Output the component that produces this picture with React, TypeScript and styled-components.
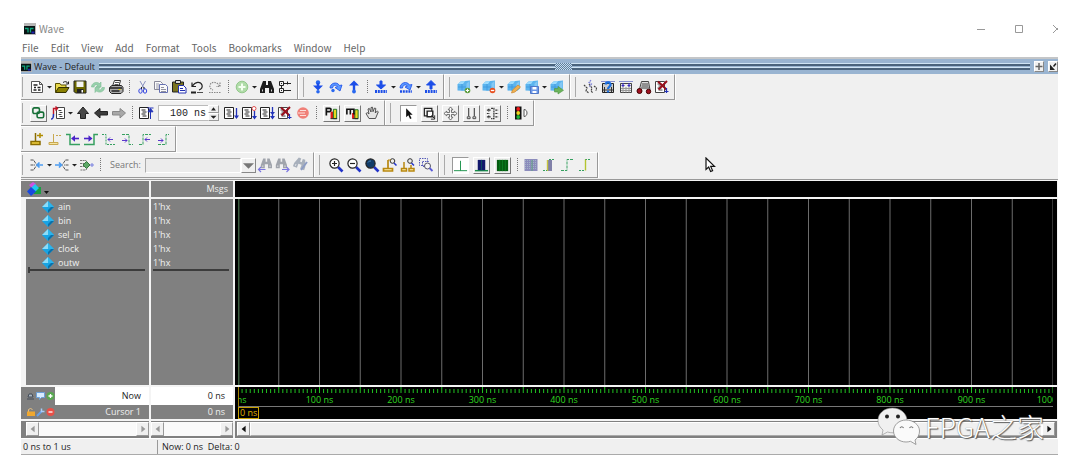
import React from "react";
import styled, { createGlobalStyle, css } from "styled-components";

const GlobalStyle = createGlobalStyle`
  * { box-sizing: border-box; }
  body { margin: 0; background: #fff; font-family: "Open Sans", "Noto Sans", sans-serif; }
  button, input, select { font: inherit; margin: 0; }
  ul { list-style: none; margin: 0; padding: 0; }
`;

/* ---------- window frame ---------- */
const Window = styled.main`
  position: relative;
  margin: 20px 22px 20px 21px;
  font-size: 9px;
  line-height: 14px;
  color: #222;
`;
const TitleBar = styled.header`
  display: flex;
  align-items: center;
  height: 18px;
  padding-left: 3px;
  gap: 3px;
  overflow: hidden;
  font-size: 10px;
  color: #888;
`;
const TitleText = styled.h1`
  flex: 1;
  margin: 0;
  font: inherit;
  font-family: "Noto Sans CJK SC", sans-serif;
`;
const WindowControls = styled.div`
  display: flex;
  gap: 28px;
  margin-right: -4px;
`;
const WindowButton = styled.button`
  display: block;
  width: 10px;
  height: 10px;
  padding: 0;
  border: 0;
  background: none;
  svg { display: block; }
`;
const MenuBar = styled.nav`
  display: flex;
  gap: 12px;
  height: 19px;
  padding-left: 1px;
  align-items: center;
`;
const MenuItem = styled.button`
  padding: 0;
  border: 0;
  background: none;
  color: #666;
  font-family: "Noto Sans CJK SC", sans-serif;
  font-size: 10px;
  line-height: 16px;
`;

/* ---------- pane header ---------- */
const PaneHeader = styled.div`
  display: flex;
  align-items: center;
  gap: 4px;
  height: 17px;
  border-top: 2px solid #c4c6c8;
  background: #99b4d1;
  color: #222;
`;
const PaneTitle = styled.h2`
  margin: 0 0 0 -2px;
  font: inherit;
  font-size: 9px;
  white-space: nowrap;
`;
const Rails = styled.div`
  flex: 1;
  display: flex;
  flex-direction: column;
  gap: 1px;
  position: relative;
`;
const Rail = styled.span`
  height: 3px;
  border-top: 1px solid #cfe4f4;
  border-bottom: 2px solid #4a637c;
`;
const RailGrip = styled.span`
  position: absolute;
  top: 0;
  left: 49%;
  width: 17px;
  height: 7px;
  background: repeating-conic-gradient(#5f7f9d 0 25%, #c8def0 0 50%) 0 0 / 2px 2px;
`;
const PaneButton = styled.button`
  width: 10px;
  height: 11px;
  padding: 0;
  border: 1px solid #fff;
  border-right-color: #888;
  border-bottom-color: #888;
  background: #f0f0f0;
  svg { display: block; }
`;

/* ---------- toolbars ---------- */
const ToolbarArea = styled.section`
  background: #f0f0f0;
  padding-bottom: 1px;
`;
const ToolbarRow = styled.div`
  display: flex;
  height: 26px;
`;
const Toolbar = styled.div<{ $lead?: number; $first?: boolean }>`
  display: flex;
  align-items: center;
  padding: 0 3px 0 ${(p) => (p.$first ? 7 : p.$lead ?? 11)}px;
  border-top: 1px solid #fff;
  border-right: 1px solid #999;
  border-bottom: 1px solid #999;
  background: linear-gradient(#aaa, #aaa) ${(p) => (p.$first ? 1 : 5)}px 2px / 1px 20px no-repeat;
  box-shadow: 1px 0 0 #fff;
`;
const Tool = styled.button<{ $raised?: boolean; $pressed?: boolean }>`
  flex: none;
  width: 18px;
  height: 18px;
  padding: 0 1px;
  border: 0;
  background: none;
  svg { display: block; }
  ${(p) =>
    (p.$raised || p.$pressed) &&
    css`
      width: 17px;
      height: 17px;
      margin: 0 2px;
      padding: 0;
      border: 1px solid ${p.$pressed ? "#999" : "#fff"};
      border-right-color: ${p.$pressed ? "#fff" : "#777"};
      border-bottom-color: ${p.$pressed ? "#fff" : "#777"};
      background: ${p.$pressed ? "#fff" : "#f0f0f0"};
    `}
`;
const Caret = styled.button`
  flex: none;
  width: 7px;
  height: 16px;
  padding: 0 1px;
  border: 0;
  background: none;
  svg { display: block; }
`;
const Separator = styled.span`
  flex: none;
  width: 9px;
  height: 14px;
  background: repeating-linear-gradient(#777 0 1px, transparent 1px 2px) 4px 0 / 1px 14px no-repeat;
`;
const RunLength = styled.div`
  display: flex;
  margin: 0 3px;
`;
const RunInput = styled.input`
  width: 50px;
  height: 16px;
  padding: 0 2px 0 0;
  border: 1px solid #bbb;
  border-right: 0;
  background: #fff;
  color: #222;
  font-family: "Liberation Mono", monospace;
  font-size: 10px;
  text-align: right;
`;
const Spinner = styled.div`
  display: flex;
  flex-direction: column;
  width: 11px;
`;
const SpinButton = styled.button`
  height: 8px;
  padding: 0;
  border: 1px solid #fff;
  border-right-color: #999;
  border-bottom-color: #999;
  background: #f0f0f0;
  svg { display: block; }
`;
const SearchLabel = styled.label`
  width: 40px;
  padding-left: 5px;
  color: #777;
`;
const SearchBox = styled.div`
  display: flex;
  width: 111px;
  height: 15px;
`;
const SearchInput = styled.input`
  flex: 1;
  min-width: 0;
  border: 1px solid #aaa;
  border-right-color: #fff;
  border-bottom-color: #fff;
  background: #ececec;
`;
const SearchDrop = styled.button`
  width: 15px;
  padding: 0 1px;
  border: 1px solid #fff;
  border-right-color: #888;
  border-bottom-color: #888;
  background: #f0f0f0;
  svg { display: block; }
`;

/* ---------- wave grid ---------- */
const WaveGrid = styled.section`
  display: grid;
  grid-template-columns: 128px 82px minmax(0, 1fr);
  grid-template-rows: 16px minmax(186px, auto) 32px 17px;
  gap: 2px;
  padding: 1px 1px 0 0;
  border-top: 1px solid #999;
  background: #f4f4f4;
  color: #f0f0f0;
`;
const HeadCell = styled.div<{ $end?: boolean; $dark?: boolean }>`
  display: flex;
  align-items: center;
  justify-content: ${(p) => (p.$end ? "flex-end" : "flex-start")};
  padding: 0 5px;
  background: ${(p) => (p.$dark ? "#000" : "#808080")};
`;
const SignalPane = styled.div<{ $names?: boolean }>`
  padding: 1px 4px 0 2px;
  margin-left: ${(p) => (p.$names ? 5 : 0)}px;
  background: #808080;
`;
const SignalItem = styled.li<{ $names?: boolean }>`
  display: flex;
  align-items: center;
  gap: 4px;
  height: 14px;
  padding-left: ${(p) => (p.$names ? 14 : 0)}px;
`;
const InsertLine = styled.hr<{ $marker?: boolean }>`
  height: 6px;
  margin: -3px 0 0;
  border: 0;
  background:
    linear-gradient(#3c3c3c, #3c3c3c) 0 2px / 100% 2px no-repeat,
    linear-gradient(#3c3c3c, #3c3c3c) 0 0 / ${(p) => (p.$marker ? 2 : 0)}px 6px no-repeat;
`;
const Canvas = styled.div`
  padding: 0 4px 0 3px;
  background: #000;
  svg { display: block; }
`;
const FootPane = styled.div`
  display: grid;
  grid-template-rows: 18px 14px;
  background: #808080;
`;
const NowRow = styled.div`
  display: flex;
  background: #fff;
  color: #222;
`;
const CursorRow = styled.div`
  display: flex;
`;
const MiniTools = styled.div`
  display: flex;
  align-items: center;
  gap: 1px;
  width: 34px;
  padding-left: 5px;
  background: #808080;
`;
const FootText = styled.span<{ $tall?: boolean }>`
  flex: 1;
  padding-right: 8px;
  text-align: right;
  line-height: ${(p) => (p.$tall ? 18 : 14)}px;
`;
const MiniButton = styled.button`
  width: 9px;
  height: 10px;
  padding: 0;
  border: 0;
  background: none;
  svg { display: block; }
`;
const Timeline = styled.div`
  display: grid;
  grid-template-rows: 19px 13px;
  padding: 0 4px 0 3px;
  background: #000;
  svg { display: block; }
`;
const CursorTrack = styled.div`
  display: flex;
  align-items: flex-start;
  border-top: 1px solid #777;
`;
const CursorTag = styled.span`
  height: 12px;
  padding: 0 1px;
  border: 1px solid #c8a000;
  color: #e0b400;
  line-height: 10px;
`;
const ScrollCell = styled.div<{ $names?: boolean; $wide?: boolean }>`
  display: flex;
  padding: 1px ${(p) => (p.$wide ? 2 : 0)}px 2px ${(p) => (p.$names ? 5 : p.$wide ? 2 : 0)}px;
  background: #808080;
`;
const ScrollButton = styled.button`
  width: 13px;
  padding: 0 2px;
  border: 1px solid #fff;
  border-right-color: #999;
  border-bottom-color: #999;
  background: #f0f0f0;
  svg { display: block; }
`;
const ScrollTrack = styled.div<{ $filled?: boolean }>`
  flex: 1;
  background: ${(p) => (p.$filled ? "#f0f0f0" : "#fafafa")};
  border: ${(p) => (p.$filled ? "1px solid #fff" : "0")};
  border-bottom-color: #aaa;
`;
const StatusBar = styled.footer`
  display: flex;
  align-items: center;
  height: 17px;
  border-top: 1px solid #fff;
  border-bottom: 1px solid #aaa;
  background: #f0f0f0;
`;
const StatusCell = styled.span<{ $width?: number }>`
  width: ${(p) => (p.$width ? `${p.$width}px` : "auto")};
  padding-left: ${(p) => (p.$width ? 2 : 4)}px;
  border-left: ${(p) => (p.$width ? "0" : "1px solid #999")};
  white-space: pre;
`;

/* ---------- overlays ---------- */
const Pointer = styled.svg`
  position: absolute;
  left: 684px;
  top: 137px;
`;
const Watermark = styled.div`
  position: absolute;
  right: 14px;
  bottom: 8px;
  display: flex;
  align-items: center;
  gap: 4px;
  color: #fff;
  font-family: "Noto Sans CJK SC", sans-serif;
  font-size: 27px;
  font-weight: 300;
  line-height: 38px;
  white-space: nowrap;
  text-shadow: 1px 1px 1px #555, 0 0 1px #777;
`;

/* ---------- icons ---------- */
const Lines = ({ c = "#222" }: { c?: string }) => (
  <path d="M1.500 2.500h9v11h-9zM3.500 5h4M4.500 7h4M3.500 9h4M4.500 11h4" stroke={c} fill="#fff" />
);
const Cube = () => (
  <>
    <path d="M1.500 5.500 4.500 2.500l9.500-1v8l-3 2.500-9.500-.5z" fill="#5cb4ee" />
    <path d="m2 5 2.800-2.500L9 2 7 5z" fill="#9cdcff" />
    <path d="m10.500 4.500 3-2.500v7l-3 2z" fill="#84c8f4" />
    <path d="M6 5v6.500M2 8h8" stroke="#3c98dc" strokeWidth=".8" />
  </>
);
const Bino = ({ c }: { c: string }) => (
  <g fill={c}>
    <path d="M4 2h3v4h2V2h3l3 8v4h-5V9H6v5H1v-4z" />
    <path d="M3.500 10.500v2M12.500 10.500v2" stroke="#fff" strokeWidth=".8" />
  </g>
);
const Lens = ({ children, fill = "#fff" }: { children?: React.ReactNode; fill?: string }) => (
  <>
    <path d="m10 10 4.500 4.500" stroke="#2233c8" strokeWidth="2.600" />
    <circle cx="6.500" cy="6.500" r="4.600" fill={fill} stroke="#222" strokeWidth="1.200" />
    {children}
  </>
);
const G = "#36a060";
const V = "#4a22c8";

const icons: Record<string, React.ReactNode> = {
  new: <><path d="M2.500 2.500h8l3 3v8h-11zM10.500 2.500v3h3" fill="#fff" stroke="#555" /><path d="M4.500 6h4M5 8.500h2M8.500 8.500h3M4.500 11h3M9 11h2.500" stroke="#222" strokeWidth="1.300" /></>,
  open: <><path d="M1.500 13V4.500H6l1 1.500h5v2.500" fill="#e8d84c" stroke="#5a5200" /><path d="m1.500 13.500 3-5H15l-3 5z" fill="#8a8000" stroke="#333000" /><path d="M9 3.500c2-1.500 4-1 5 1M14.500 2.500v2.500h-2.500" stroke="#222" fill="none" /></>,
  save: <><path d="M2 2h12v12H3.500L2 12.500z" fill="#6e6a00" stroke="#222" /><path d="M4.500 2.500h7V8h-7z" fill="#f4f4f4" /><path d="M5 10h6.500v4H5z" fill="#222" /><path d="M9.500 11h1.500v2.500H9.500z" fill="#fff" /></>,
  reload: <g fill="#98d0ac" stroke="#7cbc94" strokeWidth=".6"><path d="M1.500 8c0-4 5-6 8-3.500L11 3v5H6l1.600-1.800C6 5 4.500 6 4 8z" /><path d="M14.500 8.500c0 4-5 6-8 3.500L5 13.500v-5h5l-1.600 1.800c1.600 1.200 3.100.2 3.600-1.800z" /></g>,
  print: <><path d="m4.500 7 2-5.500h6L11 7" fill="#fff" stroke="#333" /><path d="M7 3.500h4M6.500 5.500h4" stroke="#555" /><path d="M1.500 8.500 4 6.500h9.500l1.500 2v4l-2 2H3.500l-2-2z" fill="#aaa" stroke="#222" /><path d="M2 9h12M3.500 12h8" stroke="#222" strokeWidth="1.300" /><path d="M10.500 10.500h2" stroke="#e8d800" /></>,
  cut: <g fill="none"><path d="m5 2 4.500 8M10.500 2 6 10" stroke="#8890c0" /><path d="M6.500 8v2M9 8v2" stroke="#222" /><ellipse cx="5.500" cy="12" rx="1.700" ry="2.200" stroke="#3344e0" /><ellipse cx="10" cy="12" rx="1.700" ry="2.200" stroke="#3344e0" /></g>,
  copy: <><path d="M1.500 2.500h6l2 2v6h-8z" fill="#fafafa" stroke="#889" /><path d="M3 5h3M3 7h4M3 9h4" stroke="#99a" /><path d="M6.500 5.500h6l2 2v6h-8z" fill="#fafafa" stroke="#6670b0" /><path d="M8 8.500h3M8 10.500h5M8 12.500h5" stroke="#778" strokeWidth=".8" /></>,
  paste: <><path d="M1.500 3h11v10h-11z" fill="#7a7420" stroke="#222" /><path d="M4.500 1.500h5v3h-5z" fill="#ddd" stroke="#222" /><path d="M7.500 6.500h5l2.500 2.500v5H7.500z" fill="#fff" stroke="#2230b0" /><path d="M9 9.500h3M9 11.500h5" stroke="#2230b0" /></>,
  undo: <g fill="none" stroke="#222" strokeWidth="1.200"><path d="M3 3.500v4h4M3.500 7C6 2.500 11.500 2 13 6c.6 2-.5 4-3 5" /><path d="M2 13.500h5" strokeWidth="2" /><path d="M8 13.500h6" strokeWidth=".8" /></g>,
  redo: <g fill="none" stroke="#888" strokeWidth="1.200" strokeDasharray="1.500 1"><path d="M13 3.500v4H9M12.500 7C10 2.500 4.500 2 3 6c-.6 2 .5 4 3 5" /><path d="M2 13.500h12" /></g>,
  addGreen: <><circle cx="8" cy="8" r="5.800" fill="#b0dca8" stroke="#94c88c" /><path d="M8 4.500v7M4.500 8h7" stroke="#f4fff0" strokeWidth="2" /></>,
  find: <Bino c="#1c1c1c" />,
  tree: <g fill="none" stroke="#222"><path d="M2.500 2.500h4v4h-4zM2.500 9.500h4v4h-4zM7 4.500h7M7 11.500h7M4.500 6.500v3" /><path d="M4 4.500h1M4 11.500h1M10.500 2.500v3" /></g>,
  dnBlue: <><circle cx="8" cy="3.500" r="2.200" fill="#2868f0" /><path d="M6.800 4h2.400v2.500h3.800L8 11.500 3 6.500h3.800z" fill="#1c4ee8" /><circle cx="8" cy="12.800" r="1.800" fill="#2868f0" /></>,
  overBlue: <><path d="M2 9C2 4 9 2 11.500 6.500L14 6l-2 6-5-3.500 2.400-.8C8 5.500 5 6 4.500 9z" fill="#5a98ff" stroke="#1c4ee8" strokeWidth=".8" /><circle cx="5" cy="11.500" r="1.700" fill="#2868f0" /></>,
  upBlue: <><path d="M8 1.500 3 6.500h3.800v4.500h2.400V6.500H13z" fill="#1c4ee8" /><circle cx="8" cy="12.500" r="1.900" fill="#2868f0" /></>,
  dnLine: <><path d="M7 2h2v4h3.500L8 10 3.500 6H7z" fill="#1c4ee8" stroke="#1c4ee8" /><path d="M2 12.500h12" stroke="#1c4ee8" strokeWidth="3" strokeDasharray="2 .8" /></>,
  overLine: <><path d="M2 9C2 3.500 9 1.500 11.500 6L14 5.500l-2 5.500-5-3 2.400-.8C8 5 5 5.500 4.500 9z" fill="#5a98ff" stroke="#1c4ee8" strokeWidth=".8" /><path d="M2 12.500h12" stroke="#1c4ee8" strokeWidth="2.400" strokeDasharray="2 .8" /></>,
  upLine: <><path d="M8 1.500 3.500 6H7v4h2V6h3.500z" fill="#1c4ee8" stroke="#1c4ee8" /><path d="M2 12.500h12" stroke="#1c4ee8" strokeWidth="3" strokeDasharray="2 .8" /></>,
  cubeAdd: <><Cube /><circle cx="11.500" cy="11.500" r="2.800" fill="#5c9c3c" /><path d="M11.500 9.800v3.400M9.800 11.500h3.400" stroke="#fff" /></>,
  cubeDel: <><Cube /><circle cx="11.500" cy="11.500" r="2.800" fill="#e85020" /><path d="M9.800 11.500h3.400" stroke="#fff" strokeWidth="1.300" /></>,
  cubeEdit: <><Cube /><path d="m5.500 14 1-3L12 6l2.500 2L9 13z" fill="#f0b050" stroke="#c88830" strokeWidth=".7" /></>,
  cubeSave: <><Cube /><path d="M6.500 7.500h8v7h-8z" fill="#6c98e8" stroke="#5078c8" /><path d="M8.500 8h4v2.500h-4zM8.500 12h4v2h-4z" fill="#fff" /></>,
  cubeGo: <><Cube /><path d="M5.500 9.500H9V7.500l5.500 3.800L9 15v-2H5.500z" fill="#6cb45c" stroke="#4c9440" strokeWidth=".6" /></>,
  squiggle: <g fill="none" stroke="#444" strokeWidth="1.200" strokeDasharray="2 .8"><path d="m2 6 3 3-1 3 3 2M7 5l3 4-1 3 2 2M12 7l2.500 2-.5 3" /><path d="m9 1-2 2.500L9.500 5 7.500 8" stroke="#7a80d8" /></g>,
  memHelp: <><path d="M2.500 4.500h11v9h-11z" fill="#ccc" stroke="#222" /><path d="M1.500 2.500h13" stroke="#2233b0" strokeDasharray="1 1" /><path d="M3 11h10M4.500 8v5M11.500 8v5" stroke="#333" /><path d="M5.500 5.500C6 2.500 11 2.800 10.500 6 10.200 8 8 7.800 8 10M8 11.500v2" stroke="#1c70e0" strokeWidth="2.200" fill="none" /></>,
  mem: <><path d="M2.500 4.500h11v9h-11z" fill="#eee" stroke="#444" /><path d="M3 9.500h10M3 11.500h10M5 8v5.500M8 8v5.500M11 8v5.500" stroke="#999" /><path d="M1.500 2.500h13" stroke="#2233b0" strokeDasharray="1 1" /><path d="M5 4v4M3.500 6.500h3M11 4v4M9.500 6.500h3" stroke="#3a2cc0" strokeWidth="1.200" /></>,
  car: <><path d="m3.500 10 2-7.500h7L14 11M6 5h6M5.500 7h7M5 9h8" fill="#ddd" stroke="#444" /><circle cx="3.500" cy="12" r="2.500" fill="#a01020" stroke="#400" /><circle cx="12.500" cy="12.500" r="2.200" fill="#a01020" stroke="#400" /></>,
  stopX: <><Lines c="#444" /><path d="m4 2.500 8.500 8M13 2 4.500 10.500" stroke="#98101c" strokeWidth="2" /><path d="M12.500 9v5M10.500 12.500h4" stroke="#2030b8" strokeWidth="1.200" /></>,

  link: <g fill="none" stroke="#187038" strokeWidth="1.700"><rect x="2" y="2" width="7" height="6" rx="1.500" /><rect x="6.500" y="6.500" width="7" height="6" rx="1.500" /></g>,
  restart: <><path d="M6.500 2.500h8v11h-8zM8.500 5.500h3M9.500 7.500h3M8.500 9.500h3M9.500 11.500h3" fill="#fff" stroke="#444" /><path d="M3.500 9V3.500H7M5.500 1.500l2 2-2 2" stroke="#c01828" fill="none" strokeWidth="1.400" /><path d="M1 14c2 0 2.500-1 2.500-5" stroke="#2233b8" fill="none" strokeWidth="1.600" /></>,
  up: <path d="M8 2 2.500 8.500h3v5h5v-5h3z" fill="#484848" stroke="#222" />,
  left: <path d="M1.500 8 7 3.500v3h7.500v3.500H7v3z" fill="#3c3c3c" stroke="#222" />,
  right: <path d="M14.500 8 9 3.500v3H1.500v3.500H9v3z" fill="#a8a8a8" stroke="#888" />,
  runFrom: <><Lines /><path d="M12.500 14V6M9.500 3h6M12.500 3.500 10 6.800h5z" stroke="#2233b8" fill="#2233b8" /></>,
  run: <><Lines /><path d="M13.500 3v9" stroke="#2233b8" strokeWidth="1.300" /><path d="m11 10.500 2.500 3.500 2.500-3.500z" fill="#2233b8" /></>,
  runRed: <><Lines /><path d="M13.500 6v7" stroke="#2233b8" strokeWidth="1.300" /><path d="m11 11 2.500 3.500L16 11z" fill="#2233b8" /><circle cx="13" cy="3.500" r="2" fill="#fff" stroke="#e05050" /></>,
  runAll: <><Lines /><path d="M13.500 2v11" stroke="#2233b8" strokeWidth="1.300" /><path d="m11 7 2.500 3L16 7zM11 11l2.500 3.500L16 11z" fill="#2233b8" /></>,
  stop: <><circle cx="8" cy="8" r="5.800" fill="#f08078" /><path d="M5 5.500h6M3 8h7M5 10.500h6" stroke="#fbe0dc" strokeWidth="1.200" /></>,
  pChart: <><path d="M7 13.500V6h3v7.500z" fill="#e01818" /><path d="M10 3.500h3.500v10H10z" fill="#e8d820" stroke="#187028" /><path d="M7 13.500h7" stroke="#222" /><path d="M2.500 10V2.500H6q1.500 0 1.500 1.600T6 6H3" stroke="#111" strokeWidth="1.800" fill="none" /></>,
  mChart: <><path d="M7.500 13.500V7.500h3v6z" fill="#e01818" /><path d="M10.500 4h3.500v9.500h-3.500z" fill="#e8d820" stroke="#187028" /><path d="M8 13.500h6" stroke="#222" /><path d="M2 9V3.500h7.500V9M5.700 3.500V9" stroke="#111" strokeWidth="1.700" fill="none" /></>,
  hand: <path d="M5 13.500 2 8.500l1.500-.8L5 9 4 4l1.300-.6L7 7V2.500l1.500-.3.500 4.500L10.500 3l1.300.4L11.300 8l2-2 1 .8-2.800 6.700z" fill="#e4e4e4" stroke="#444" strokeWidth=".9" />,
  select: <path d="M5.500 2.500v9.500l2.300-2.200 1.900 4 1.600-.8-1.900-3.800h3z" fill="#111" />,
  zoomMode: <><path d="M2.500 2.500h8v8h-8z" fill="none" stroke="#222" strokeWidth="1.300" /><path d="M5.500 5.500h6v6h-6z" fill="#fff" stroke="#222" strokeWidth="1.500" /><path d="m10 10 3.500 3.500M13.500 10v4h-4" stroke="#222" /></>,
  pan: <path d="M8 1 5.500 4H7v3H4V5.500L1 8l3 2.500V9h3v3H5.500L8 15l2.500-3H9V9h3v1.500L15 8l-3-2.500V7H9V4h1.500z" fill="#fff" stroke="#555" strokeWidth=".9" />,
  twoCur: <g fill="none" stroke="#444"><path d="M5 2v9M11 2v9" strokeWidth="1.200" /><path d="M3.500 11.500h3v2h-3zM9.500 11.500h3v2h-3z" /></g>,
  expand: <path d="M2 4.500h4M2 11.500h4M4 3v3M4 10v3M2 8h3M6.500 2.500h3v11h-3M11 4.500h3M11 11.500h3M11 8h3" fill="none" stroke="#333" strokeDasharray="2 .6" strokeWidth="1.300" />,
  traffic: <><path d="M2 1.500h6.500v13H2z" fill="#111" /><circle cx="5.200" cy="4" r="1.900" fill="#f01818" /><circle cx="5.200" cy="8" r="1.900" fill="#f0d820" /><circle cx="5.200" cy="12" r="1.900" fill="#20b838" /><path d="M11 4.500v7c4 0 4-7 0-7z" fill="#fff" stroke="#555" /></>,

  curAdd: <><path d="M6.500 2v8M2 10.500h9v3H2z" stroke="#8a6c00" strokeWidth="1.500" fill="#f0d040" /><path d="M8 4.500h6M11 2v5" stroke="#b08c00" strokeWidth="1.500" /></>,
  curDel: <><path d="M6.500 3v8M2 11.500h9v2H2z" stroke="#c8a850" fill="#f4e4a0" /><path d="M9 4.500h5" stroke="#c8a850" strokeDasharray="2 1" /></>,
  edgePrev: <><path d="M1 3.500h4v10h10" stroke={G} strokeWidth="1.500" fill="none" /><path d="M14 7.500H8" stroke={V} strokeWidth="1.600" /><path d="m6 7.500 4-3.300v6.600z" fill={V} /></>,
  edgeNext: <><path d="M1 13.500h10v-10h4" stroke={G} strokeWidth="1.500" fill="none" /><path d="M1 7.500h6" stroke={V} strokeWidth="1.600" /><path d="m9.500 7.500-4-3.300v6.600z" fill={V} /></>,
  fallPrev: <><path d="M1 3.500h4v10h9" stroke={G} fill="none" strokeDasharray="2 1" /><path d="M12 8.500H7M9 6.500l-2 2 2 2" stroke={V} fill="none" strokeWidth=".9" /></>,
  fallNext: <><path d="M3 3.500h7v10h4" stroke={G} fill="none" strokeDasharray="3 1" /><path d="M3 9.500h5M6 7.500l2 2-2 2" stroke={V} fill="none" strokeWidth=".9" /></>,
  risePrev: <><path d="M2 13.500h4v-10h8" stroke={G} fill="none" strokeDasharray="3 1" /><path d="M13 8.500H8M10 6.500l-2 2 2 2" stroke={V} fill="none" strokeWidth=".9" /></>,
  riseNext: <><path d="M3 13.500h8v-10h3" stroke={G} fill="none" strokeDasharray="3 1" /><path d="M3 9.500h5M6 7.500l2 2-2 2" stroke={V} fill="none" strokeWidth=".9" /></>,

  expLeft: <><path d="M1.500 3h3l3 4.500M1.500 8H6M1.500 13h3l3-4.500" stroke="#555" fill="none" strokeDasharray="3 .6" /><path d="M8 8h6M10.500 5.500 8 8l2.500 2.500" stroke="#4c9cf0" strokeWidth="1.700" fill="none" /></>,
  expRight: <><path d="M14.500 3h-3l-3 4.500M14.500 8H10M14.500 13h-3l-3-4.500" stroke="#555" fill="none" strokeDasharray="3 .6" /><path d="M1 8h6M5 5.500 7.500 8 5 10.500" stroke="#4c9cf0" strokeWidth="1.700" fill="none" /></>,
  expBoth: <><path d="M1 3.500h6l3 4.500-3 5H1M1 6.500h4M1 9.500h4" stroke="#777" fill="none" strokeDasharray="2 .6" /><path d="M7.500 4.500 11 8l-3.500 3.500L4 8z" fill="#5ea868" stroke="#357840" /><path d="M11 8h4M13 6v4" stroke="#7880e0" /></>,
  findPrev: <><g transform="translate(3 0) scale(.8)"><Bino c="#a0a4ac" /></g><path d="M1.500 12.500h7M4 10l-2.500 2.500L4 15" stroke="#7a74e0" fill="none" strokeWidth="1.200" /></>,
  findNext: <><g transform="scale(.8)"><Bino c="#a0a4ac" /></g><path d="M7 12.500h7M11.500 10l2.500 2.500-2.500 2.500" stroke="#7a74e0" fill="none" strokeWidth="1.200" /></>,
  findOpt: <><g transform="rotate(20 8 8) scale(.85)"><Bino c="#a8b0bc" /></g><path d="m8 13 6-8" stroke="#8c9cc4" strokeWidth="1.800" /></>,
  zoomIn: <Lens><path d="M6.500 4v5M4 6.500h5" stroke="#222" strokeWidth="1.200" /></Lens>,
  zoomOut: <Lens><path d="M4 6.500h5" stroke="#222" strokeWidth="1.200" /></Lens>,
  zoomFull: <Lens fill="#123c68"><path d="M4 5.500q1-2 3-1.500" stroke="#4c88b8" fill="none" /></Lens>,
  zoomCur: <><path d="M6 3v8M1.500 11.500h9v2.500h-9z" stroke="#b88810" strokeWidth="1.700" fill="#fff0b0" /><circle cx="10.500" cy="4" r="2.300" fill="#eee" stroke="#333" /><path d="m12 6 2.500 2.500" stroke="#2233c8" strokeWidth="1.500" /><path d="M6 3h3" stroke="#b88810" /></>,
  zoomTwo: <><path d="M4 5v6M1.500 11.500h5V14h-5zM11 8v3M9 11.500h5V14H9z" stroke="#b88810" strokeWidth="1.500" fill="#fff0b0" /><circle cx="10" cy="4" r="2.300" fill="#eee" stroke="#333" /><path d="m11.500 6 2.500 2.500" stroke="#2233c8" strokeWidth="1.500" /></>,
  zoomArea: <><path d="M1.500 1.500h8v7h-8z" fill="none" stroke="#555bb8" strokeDasharray="1.500 1" /><path d="M4.500 4.500h6v5h-6z" fill="none" stroke="#555bb8" strokeDasharray="1.500 1" /><circle cx="9.500" cy="9" r="3" fill="#f4f4f4" stroke="#556" /><path d="m11.500 11 3 3" stroke="#5a5ad8" strokeWidth="1.800" /></>,
  waveMid: <path d="M1 13.500h14M8 3v10.500" stroke="#189048" />,
  waveBlue: <><path d="M1 13.500h14" stroke="#189048" strokeWidth="1.500" /><path d="M4 2h8v11H4z" fill="#12186c" /><path d="M8 2v11" stroke="#0c4c60" /></>,
  waveGreen: <><path d="M2 2h12v12H2z" fill="#045c10" /><path d="M5 2v12M8 2v12M11 2v12" stroke="#0a7c20" /></>,
  dithA: <><path d="M1.500 2h13v12h-13z" fill="#8c8cbc" /><path d="M2 3.500h12M2 5.500h12M2 7.500h12M2 9.500h12M2 11.500h12" stroke="#a4b4c8" strokeDasharray="1 1" /><path d="M9 3v11" stroke="#60a080" /></>,
  dithB: <><path d="M6 3h5v11H6z" fill="#8080a8" /><path d="M6.500 3v11" stroke="#c8c440" strokeWidth="1.400" /><path d="M2 13.500h4M8 2.500h6" stroke={G} strokeDasharray="2 1" /></>,
  dithC: <path d="M2 13.500h6v-11h6" fill="none" stroke={G} strokeDasharray="3 1" />,
  dithD: <><path d="M2 13.500h6M8 2.500h6" stroke={G} strokeDasharray="2 1" /><path d="M8.500 2.500v11" stroke="#b4c430" strokeWidth="1.400" /></>,
};

const Glyph = ({ name, size = 16 }: { name: string; size?: number }) => (
  <svg width={size} height={size} viewBox="0 0 16 16" fill="none" aria-hidden="true">
    {icons[name]}
  </svg>
);

const WaveLogo = ({ size = 12 }: { size?: number }) => (
  <svg width={size} height={size} viewBox="0 0 12 12" aria-hidden="true">
    <path d="M0 0h12v12H0z" fill="#b8b8b8" />
    <path d="M0 3h11v8H0z" fill="#0a1414" />
    <path d="M1 5.500h3v4M6.500 9.500v-4h3" stroke="#10a880" strokeWidth="1.300" fill="none" />
    <path d="M7.500 8.500h3v2h-3z" fill="#2020b0" />
  </svg>
);

const Tri = ({ dir, c = "#222", w = 5, h = 16 }: { dir: "up" | "down" | "left" | "right"; c?: string; w?: number; h?: number }) => {
  const d = { up: "M1 7.500 5 2l4 5.500z", down: "M0 3h10L5 8z", left: "M7 1v8L2 5z", right: "M3 1v8l5-4z" }[dir];
  return (
    <svg width={w} height={h} viewBox="0 0 10 10" aria-hidden="true">
      <path d={d} fill={c} />
    </svg>
  );
};

/* Tool names separated by spaces: "|" is a divider, "v" a drop-down caret,
   "^name" a raised button and "_name" a pressed one. */
const Tools = ({ list }: { list: string }) => (
  <>
    {list.split(" ").map((t, i) => {
      if (t === "|") return <Separator key={i} />;
      if (t === "v")
        return (
          <Caret key={i} aria-label="More">
            <Tri dir="down" />
          </Caret>
        );
      const raised = t[0] === "^";
      const pressed = t[0] === "_";
      const name = raised || pressed ? t.slice(1) : t;
      return (
        <Tool key={i} aria-label={name} $raised={raised} $pressed={pressed}>
          <Glyph name={name} size={raised || pressed ? 15 : 16} />
        </Tool>
      );
    })}
  </>
);

const Gem = () => (
  <svg width="12" height="12" viewBox="0 0 12 12" aria-hidden="true">
    <path d="M6 0 12 6 6 12 0 6z" fill="#18a4e4" />
    <path d="M6 0v6H0z" fill="#8cdcf8" />
    <path d="M6 0 12 6H6z" fill="#2cb4ec" />
    <path d="M12 6 6 12V9l3-3z" fill="#0c70a8" />
  </svg>
);

const menus = ["File", "Edit", "View", "Add", "Format", "Tools", "Bookmarks", "Window", "Help"];
const signals = [
  { name: "ain", value: "1'hx" },
  { name: "bin", value: "1'hx" },
  { name: "sel_in", value: "1'hx" },
  { name: "clock", value: "1'hx" },
  { name: "outw", value: "1'hx" },
];
const range = (n: number) => Array.from({ length: n }, (_, i) => i);

const Scroll = ({ names, wide }: { names?: boolean; wide?: boolean }) => {
  const c = wide ? "#111" : "#999";
  return (
    <ScrollCell $names={names} $wide={wide}>
      <ScrollButton aria-label="Scroll left"><Tri dir="left" c={c} w={8} h={12} /></ScrollButton>
      <ScrollTrack $filled={wide} />
      <ScrollButton aria-label="Scroll right"><Tri dir="right" c={c} w={8} h={12} /></ScrollButton>
    </ScrollCell>
  );
};

export default function App() {
  return (
    <>
      <GlobalStyle />
      <Window>
        <TitleBar>
          <WaveLogo />
          <TitleText>Wave</TitleText>
          <WindowControls>
            <WindowButton aria-label="Minimize"><svg width="10" height="10"><path d="M1 5.500h8" stroke="#999" /></svg></WindowButton>
            <WindowButton aria-label="Maximize"><svg width="10" height="10"><path d="M1.500 1.500h7v7h-7z" fill="none" stroke="#999" /></svg></WindowButton>
            <WindowButton aria-label="Close"><svg width="10" height="10"><path d="m1 1 8 8M9 1 1 9" stroke="#999" /></svg></WindowButton>
          </WindowControls>
        </TitleBar>
        <MenuBar>
          {menus.map((m) => <MenuItem key={m}>{m}</MenuItem>)}
        </MenuBar>

        <PaneHeader>
          <WaveLogo size={11} />
          <PaneTitle>Wave - Default</PaneTitle>
          <Rails><Rail /><Rail /><RailGrip /></Rails>
          <PaneButton aria-label="Zoom pane"><svg width="8" height="9"><path d="M4 1v7M.5 4.500h7" stroke="#666" strokeWidth="1.500" /></svg></PaneButton>
          <PaneButton aria-label="Undock pane"><svg width="8" height="9"><path d="M7 1.500 4.500 4.500" stroke="#222" strokeWidth="1.500" /><path d="M1 2.500v5.500h5z" fill="#222" /></svg></PaneButton>
        </PaneHeader>

        <ToolbarArea>
          <ToolbarRow>
            <Toolbar $first><Tools list="new v open save reload print | cut copy paste undo redo | addGreen v find tree" /></Toolbar>
            <Toolbar><Tools list="dnBlue overBlue upBlue | dnLine v overLine v upLine" /></Toolbar>
            <Toolbar><Tools list="cubeAdd v cubeDel v cubeEdit cubeSave v cubeGo" /></Toolbar>
            <Toolbar><Tools list="squiggle memHelp mem car stopX" /></Toolbar>
          </ToolbarRow>
          <ToolbarRow>
            <Toolbar $first>
              <Tools list="^link restart v up left right | runFrom" />
              <RunLength>
                <RunInput aria-label="Run length" defaultValue="100 ns" />
                <Spinner>
                  <SpinButton aria-label="Increase"><Tri dir="up" w={9} h={6} /></SpinButton>
                  <SpinButton aria-label="Decrease"><Tri dir="down" w={9} h={6} /></SpinButton>
                </Spinner>
              </RunLength>
              <Tools list="run runRed runAll stopX stop | ^pChart ^mChart hand" />
            </Toolbar>
            <Toolbar $lead={13}><Tools list="_select ^zoomMode ^pan ^twoCur ^expand | traffic" /></Toolbar>
          </ToolbarRow>
          <ToolbarRow>
            <Toolbar $first><Tools list="curAdd curDel edgePrev edgeNext fallPrev fallNext risePrev riseNext" /></Toolbar>
          </ToolbarRow>
          <ToolbarRow>
            <Toolbar $first>
              <Tools list="expLeft v expRight v expBoth |" />
              <SearchLabel htmlFor="search">Search:</SearchLabel>
              <SearchBox>
                <SearchInput id="search" />
                <SearchDrop aria-label="Search history"><Tri dir="down" c="#777" w={11} h={13} /></SearchDrop>
              </SearchBox>
              <Tools list="findPrev findNext findOpt" />
            </Toolbar>
            <Toolbar $lead={13}><Tools list="zoomIn zoomOut zoomFull zoomCur zoomTwo zoomArea" /></Toolbar>
            <Toolbar><Tools list="_waveMid ^waveBlue ^waveGreen | dithA dithB dithC dithD" /></Toolbar>
          </ToolbarRow>
        </ToolbarArea>

        <WaveGrid>
          <HeadCell>
            <svg width="24" height="14" viewBox="0 0 24 14" aria-hidden="true">
              <path d="m3 3 4-3 3 2-4 4z" fill="#d050e0" />
              <path d="M8 5h7v7H8z" fill="#18a040" />
              <path d="m9 2 4 4-4 4-4-4z" fill="#20c8f0" />
              <path d="m5 5 5 4.500L5 14 1 9.500z" fill="#1848e0" />
              <path d="M18 9h5l-2.500 3z" fill="#111" />
            </svg>
          </HeadCell>
          <HeadCell $end>Msgs</HeadCell>
          <HeadCell $dark />

          <SignalPane $names>
            <ul>{signals.map((s) => <SignalItem key={s.name} $names><Gem />{s.name}</SignalItem>)}</ul>
            <InsertLine $marker />
          </SignalPane>
          <SignalPane>
            <ul>{signals.map((s) => <SignalItem key={s.name}>{s.value}</SignalItem>)}</ul>
            <InsertLine />
          </SignalPane>
          <Canvas>
            <svg width="100%" height="100%" aria-label="Waveforms">
              <path d="M.5 0v2000" stroke="#3c5c40" strokeWidth="2" />
              {range(20).map((i) => (
                <line key={i} x1={`${(i + 1) * 5}%`} x2={`${(i + 1) * 5}%`} y1="0" y2="100%" stroke="#6c6c6c" />
              ))}
            </svg>
          </Canvas>

          <FootPane>
            <NowRow>
              <MiniTools>
                <MiniButton aria-label="Find cursor"><svg width="9" height="10"><path d="M1 8h7M2 6l1-3h3l1 3z" stroke="#444c58" fill="#a8b4c0" /></svg></MiniButton>
                <MiniButton aria-label="Comment"><svg width="9" height="10"><path d="M.5 1.500h8v5h-3l-2 2v-2h-3z" fill="#d8ecff" stroke="#6ca0d8" /></svg></MiniButton>
                <MiniButton aria-label="Add cursor"><svg width="9" height="10"><circle cx="4.500" cy="5" r="4" fill="#58a850" /><path d="M4.500 3v4M2.500 5h4" stroke="#fff" strokeWidth="1.300" /></svg></MiniButton>
              </MiniTools>
              <FootText $tall>Now</FootText>
            </NowRow>
            <CursorRow>
              <MiniTools>
                <MiniButton aria-label="Lock cursor"><svg width="9" height="10"><path d="M2.500 5V2.500q2-2 4 0" stroke="#e8c080" fill="none" /><path d="M1 4.500h8V9H1z" fill="#f0a830" /></svg></MiniButton>
                <MiniButton aria-label="Edit cursor"><svg width="9" height="10"><path d="m1 9 5-5" stroke="#68a0e8" strokeWidth="2" /><path d="M5.500 1.500v3h3" stroke="#a8ccf8" strokeWidth="1.500" fill="none" /></svg></MiniButton>
                <MiniButton aria-label="Remove cursor"><svg width="9" height="10"><circle cx="4.500" cy="5" r="4" fill="#e85048" /><path d="M2.500 5h4" stroke="#fff" strokeWidth="1.300" /></svg></MiniButton>
              </MiniTools>
              <FootText>Cursor 1</FootText>
            </CursorRow>
          </FootPane>
          <FootPane>
            <NowRow><FootText $tall>0 ns</FootText></NowRow>
            <CursorRow><FootText>0 ns</FootText></CursorRow>
          </FootPane>
          <Timeline>
            <svg width="100%" height="19" aria-label="Time ruler">
              {range(201).map((i) => (
                <line key={i} x1={`${i / 2}%`} x2={`${i / 2}%`} y1={i % 10 ? 2 : 0} y2="6" stroke="#20c020" />
              ))}
              {range(11).map((i) => (
                <text key={i} x={`${i * 10}%`} y="16" textAnchor="middle" fontSize="9" fill="#30d820">{`${i * 100} ns`}</text>
              ))}
              <path d="M.5 0v19" stroke="#a08000" />
            </svg>
            <CursorTrack><CursorTag>0 ns</CursorTag></CursorTrack>
          </Timeline>

          <Scroll names />
          <Scroll />
          <Scroll wide />
        </WaveGrid>

        <StatusBar>
          <StatusCell $width={136}>0 ns to 1 us</StatusCell>
          <StatusCell>{"Now: 0 ns  Delta: 0"}</StatusCell>
        </StatusBar>

        <Pointer width="11" height="16" viewBox="0 0 11 16" aria-hidden="true">
          <path d="M1 1v11.500l2.700-2.400 1.900 4.400 2-.9-1.900-4.200H9.500z" fill="#fff" stroke="#111" strokeWidth="1.200" />
        </Pointer>
        <Watermark>
          <svg width="44" height="40" viewBox="0 0 44 40" aria-hidden="true">
            <path d="M15.500 1C7 1 1 6.500 1 13.500c0 4 2 7 5 9.500l-1 5 5.500-3c2 .6 3.500.8 5.500.8C24 25.500 30 20 30 13.500S24 1 15.500 1z" fill="#f0f0f0" stroke="#888" strokeWidth=".6" />
            <circle cx="10" cy="9.500" r="2" fill="#222" />
            <circle cx="21" cy="9.500" r="2" fill="#222" />
            <path d="M29 13c-7 0-12.500 5-12.500 11S22 35 29 35c1.600 0 3-.2 4.500-.7L39 37.500l-1-4.500c3-2 4.500-5.400 4.500-9 0-6-6-11-13.500-11z" fill="#fafafa" stroke="#888" strokeWidth=".8" />
            <path d="M23 21q1.800-2.500 3.600 0M32.500 21q1.800-2.500 3.600 0" fill="none" stroke="#777" strokeWidth="1.200" />
          </svg>
          FPGA之家
        </Watermark>
      </Window>
    </>
  );
}
